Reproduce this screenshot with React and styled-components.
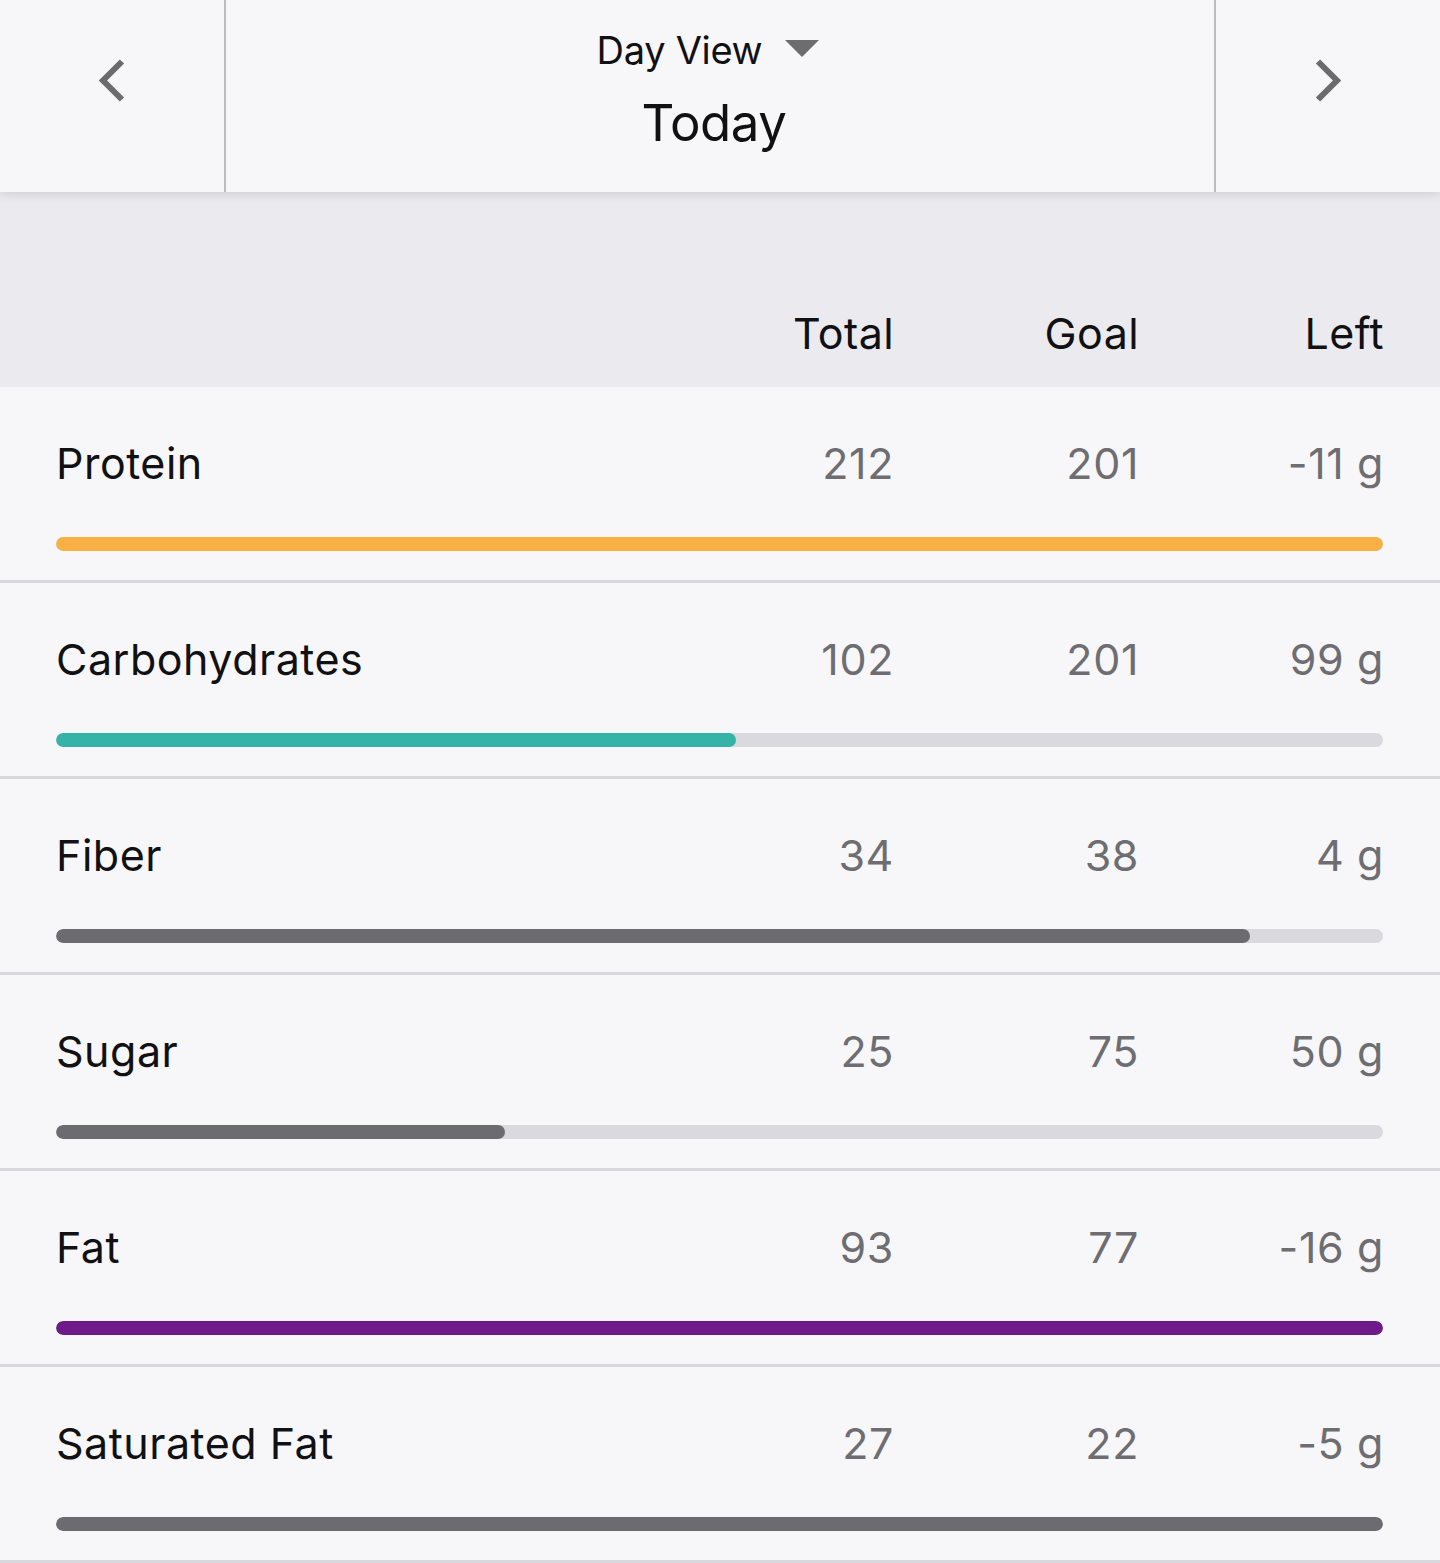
import React from 'react'
import styled, { createGlobalStyle } from 'styled-components'

const GlobalStyle = createGlobalStyle`
  html, body {
    margin: 0;
    padding: 0;
    background: #f7f7f9;
    font-family: Inter, "Noto Sans", sans-serif;
    color: #111114;
  }
`

const nutrients = [
  { name: 'Protein', total: 212, goal: 201, color: '#f8b045' },
  { name: 'Carbohydrates', total: 102, goal: 201, color: '#36b3a8' },
  { name: 'Fiber', total: 34, goal: 38, color: '#6c6c70' },
  { name: 'Sugar', total: 25, goal: 75, color: '#6c6c70' },
  { name: 'Fat', total: 93, goal: 77, color: '#6e1a8a' },
  { name: 'Saturated Fat', total: 27, goal: 22, color: '#6c6c70' },
]

function Chevron({ dir }) {
  const d = dir === 'left' ? 'M24 2.5 L5 21.5 L24 40.5' : 'M4 2.5 L23 21.5 L4 40.5'
  return (
    <svg width="28" height="43" viewBox="0 0 28 43" fill="none">
      <path d={d} stroke="#6b6b6e" strokeWidth="6" strokeLinecap="butt" strokeLinejoin="miter" />
    </svg>
  )
}

function App() {
  return (
    <Page>
      <GlobalStyle />
      <TopBar>
        <NavButton side="left"><Chevron dir="left" /></NavButton>
        <Center>
          <ViewPicker>
            <span>Day View</span>
            <Caret viewBox="0 0 34 17"><path d="M0 0 H34 L17 17 Z" fill="#6d6d70" /></Caret>
          </ViewPicker>
          <DateLabel>Today</DateLabel>
        </Center>
        <NavButton side="right"><Chevron dir="right" /></NavButton>
      </TopBar>
      <ColumnHead>
        <span />
        <HeadCell>Total</HeadCell>
        <HeadCell>Goal</HeadCell>
        <HeadCell>Left</HeadCell>
      </ColumnHead>
      {nutrients.map((n) => {
        const pct = Math.min(100, (n.total / n.goal) * 100)
        return (
          <Row key={n.name}>
            <Line>
              <Name>{n.name}</Name>
              <Value>{n.total}</Value>
              <Value>{n.goal}</Value>
              <Value>{n.goal - n.total} g</Value>
            </Line>
            <Track>
              <Fill color={n.color} style={{ width: `min(100%, calc(${pct}% + 7px))` }} />
            </Track>
          </Row>
        )
      })}
    </Page>
  )
}

const Page = styled.div`
  width: 1440px;
  min-height: 1563px;
  background: #f7f7f9;
`

const TopBar = styled.div`
  position: relative;
  z-index: 1;
  height: 192px;
  display: grid;
  grid-template-columns: 226px 1fr 226px;
  background: #f7f7f9;
  box-shadow: 0 2px 10px rgba(0, 0, 0, 0.13);
`

const NavButton = styled.div`
  display: flex;
  align-items: center;
  justify-content: center;
  padding-bottom: 32px;
  border-right: ${(p) => (p.side === 'left' ? '2px solid #bdbdc0' : 'none')};
  border-left: ${(p) => (p.side === 'right' ? '2px solid #bdbdc0' : 'none')};
`

const Center = styled.div`
  display: flex;
  flex-direction: column;
  align-items: center;
  padding-top: 30px;
  gap: 26px;
`

const ViewPicker = styled.div`
  display: flex;
  align-items: center;
  gap: 23px;
  font-size: 38px;
  line-height: 40px;
  letter-spacing: -0.3px;
  margin-left: -24px;
`

const Caret = styled.svg`
  width: 34px;
  height: 17px;
  margin-top: -4px;
`

const DateLabel = styled.div`
  font-size: 51px;
  line-height: 53px;
  letter-spacing: -0.5px;
  margin-left: -12px;
`

const ColumnHead = styled.div`
  background: #ebebef;
  height: 195px;
  box-sizing: border-box;
  padding: 119px 57px 0 56px;
  display: grid;
  grid-template-columns: 1fr 245px 245px 245px;
  font-size: 43px;
  line-height: 44px;
`

const HeadCell = styled.div`
  text-align: right;
  letter-spacing: 0.4px;
  margin-right: -1px;
`

const Row = styled.div`
  padding: 54px 57px 29px 56px;
  border-bottom: 3px solid #d9d9dd;
`

const Line = styled.div`
  display: grid;
  grid-template-columns: 1fr 245px 245px 245px;
  font-size: 43px;
  line-height: 44px;
  margin-bottom: 52px;
`

const Name = styled.div`
  color: #111114;
  letter-spacing: 0.5px;
`

const Value = styled.div`
  text-align: right;
  color: #6e6e72;
  letter-spacing: 0.6px;
  margin-right: -1px;
`

const Track = styled.div`
  height: 14px;
  border-radius: 7px;
  background: #dadade;
  overflow: hidden;
`

const Fill = styled.div`
  height: 100%;
  border-radius: 7px;
  background: ${(p) => p.color};
`

export default App
